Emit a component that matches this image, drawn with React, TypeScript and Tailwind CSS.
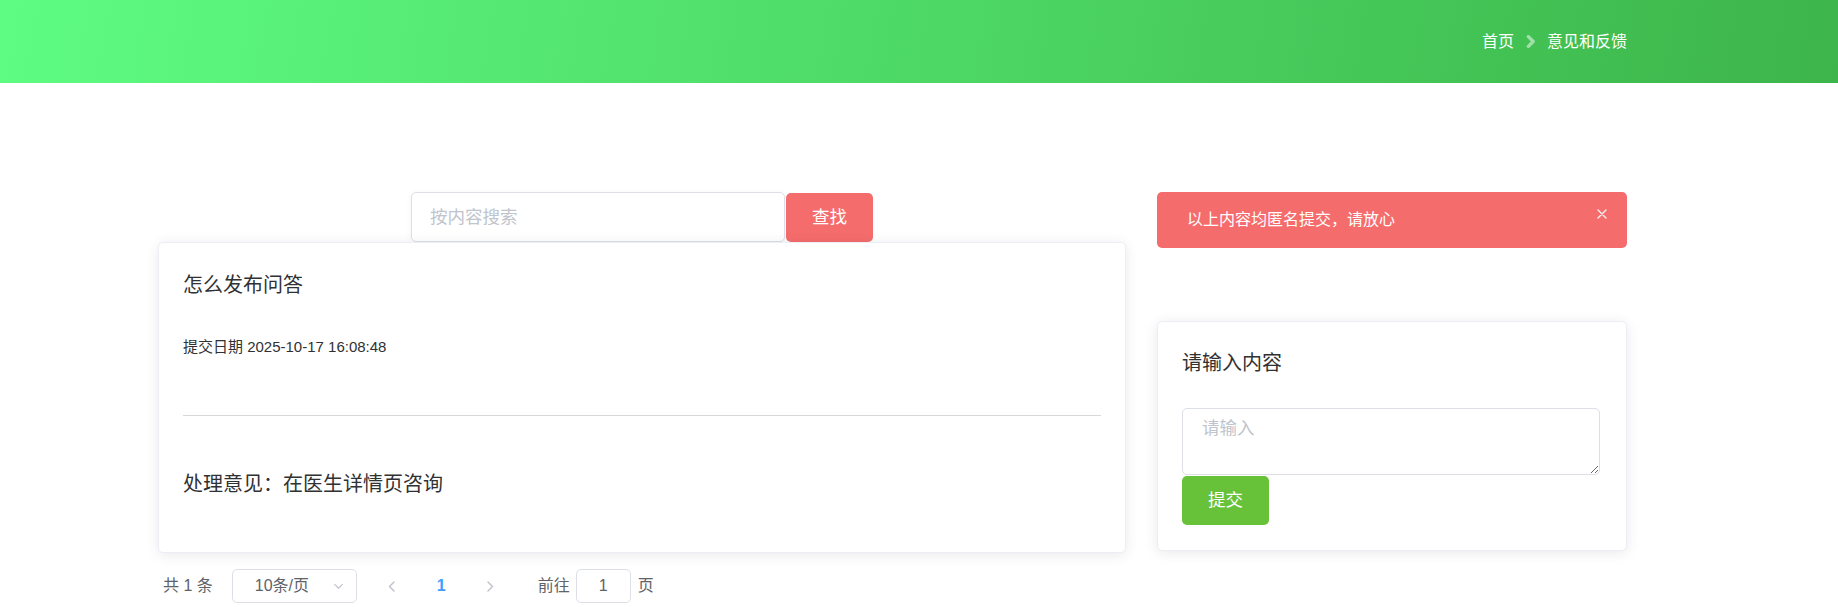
import { useState } from 'react'

function ChevronRight({ className }: { className?: string }) {
  return (
    <svg viewBox="0 0 8 12" className={className} fill="none" stroke="currentColor" strokeLinecap="round" strokeLinejoin="round">
      <path d="M2 1.5 6.5 6 2 10.5" />
    </svg>
  )
}

function ChevronLeft({ className }: { className?: string }) {
  return (
    <svg viewBox="0 0 8 12" className={className} fill="none" stroke="currentColor" strokeLinecap="round" strokeLinejoin="round">
      <path d="M6 1.5 1.5 6 6 10.5" />
    </svg>
  )
}

function ChevronDown({ className }: { className?: string }) {
  return (
    <svg viewBox="0 0 12 8" className={className} fill="none" stroke="currentColor" strokeLinecap="round" strokeLinejoin="round">
      <path d="M1.5 1.5 6 6 10.5 1.5" />
    </svg>
  )
}

function Close({ className }: { className?: string }) {
  return (
    <svg viewBox="0 0 10 10" className={className} fill="none" stroke="currentColor" strokeLinecap="round">
      <path d="M1 1l8 8M9 1 1 9" />
    </svg>
  )
}

export default function App() {
  const [keyword, setKeyword] = useState('')
  const [content, setContent] = useState('')
  const [showTip, setShowTip] = useState(true)

  return (
    <div className="min-h-[607px] w-[1838px] overflow-hidden bg-white font-['Liberation_Sans','Noto_Sans_CJK_SC',sans-serif] text-[#303133]">
      {/* Header */}
      <header className="h-[83px] bg-[linear-gradient(100deg,#5efc82,#3db54a)] flex items-center justify-end pr-[211px]">
        <nav className="flex items-center text-[16px] text-white leading-none">
          <span>首页</span>
          <ChevronRight className="w-[9px] h-[13px] mx-[12px] text-white/50 stroke-[3]" />
          <span>意见和反馈</span>
        </nav>
      </header>

      {/* Content */}
      <main className="ml-[158px] mt-[109px] flex items-start gap-[31px]">
        {/* Left column */}
        <section className="w-[968px] flex flex-col">
          <div className="flex justify-center h-[50px]">
            <input
              value={keyword}
              onChange={e => setKeyword(e.target.value)}
              placeholder="按内容搜索"
              className="w-[374px] h-[50px] border border-[#dcdfe6] rounded-[5px] pl-[18px] text-[17.5px] outline-none placeholder:text-[#c0c4cc] shadow-[0_1px_6px_rgba(0,0,0,0.05)]"
            />
            <button className="w-[87px] h-[49px] mt-px ml-px rounded-[5px] bg-[#f56c6c] text-white text-[17.5px]">查找</button>
          </div>

          <div className="bg-white border border-[#ebeef5] rounded-[5px] shadow-[0_2px_14px_rgba(0,0,0,0.09)] px-[24px] pt-[23px] h-[311px]">
            <h3 className="text-[20px] leading-[38px]">怎么发布问答</h3>
            <p className="mt-[33px] text-[15px] leading-[20px]">提交日期 2025-10-17 16:08:48</p>
            <div className="mt-[58px] border-t border-[#d6d8dc]" />
            <p className="mt-[53px] text-[20px] leading-[30px]">处理意见：在医生详情页咨询</p>
          </div>

          {/* Pagination */}
          <div className="mt-[16px] h-[34px] pl-[5px] flex items-center text-[16px] text-[#606266]">
            <span>共 1 条</span>
            <div className="ml-[19px] w-[125px] h-[34px] border border-[#dcdfe6] rounded-[5px] flex items-center pl-[22px] pr-[12px] justify-between">
              <span>10条/页</span>
              <ChevronDown className="w-[11px] h-[7px] text-[#c0c4cc] stroke-[1.3]" />
            </div>
            <button className="ml-[11px] w-[49px] h-[34px] flex items-center justify-center text-[#c0c4cc]">
              <ChevronLeft className="w-[8px] h-[13px] stroke-[1.5]" />
            </button>
            <button className="w-[49px] h-[34px] flex items-center justify-center text-[#409eff] font-bold">1</button>
            <button className="w-[49px] h-[34px] flex items-center justify-center text-[#c0c4cc]">
              <ChevronRight className="w-[8px] h-[13px] stroke-[1.5]" />
            </button>
            <span className="ml-[23px]">前往</span>
            <input
              defaultValue="1"
              className="ml-[6px] w-[55px] h-[34px] border border-[#dcdfe6] rounded-[5px] text-center text-[16px] text-[#606266] outline-none"
            />
            <span className="ml-[7px]">页</span>
          </div>
        </section>

        {/* Right column */}
        <aside className="w-[470px] flex flex-col">
          <div className="h-[56px] rounded-[5px] bg-[#f56c6c] text-white relative flex items-center pl-[30px]">
            {showTip && <span className="text-[16px] leading-none">以上内容均匿名提交，请放心</span>}
            <button onClick={() => setShowTip(false)} className="absolute right-[20px] top-[17px] text-white/90">
              <Close className="w-[10px] h-[10px] stroke-[1.4]" />
            </button>
          </div>

          <div className="mt-[73px] bg-white border border-[#ebeef5] rounded-[5px] shadow-[0_2px_14px_rgba(0,0,0,0.09)] px-[24px] pt-[23px] pb-[25px]">
            <h3 className="text-[20px] leading-[36px]">请输入内容</h3>
            <textarea
              value={content}
              onChange={e => setContent(e.target.value)}
              placeholder="请输入"
              className="mt-[27px] block w-[418px] h-[67px] border border-[#dcdfe6] rounded-[5px] px-[19px] py-[6px] text-[17.5px] leading-[26px] outline-none placeholder:text-[#c0c4cc]"
            />
            <button className="mt-px w-[87px] h-[49px] rounded-[5px] bg-[#67c23a] text-white text-[17.5px]">提交</button>
          </div>
        </aside>
      </main>
    </div>
  )
}
